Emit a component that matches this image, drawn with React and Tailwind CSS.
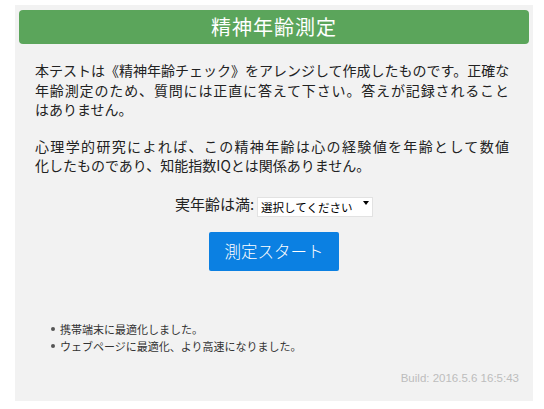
import React, { useState } from "react";

const notes = ["携帯端末に最適化しました。", "ウェブページに最適化、より高速になりました。"];

// full lines are spread to the column width, last lines stay left
const Line = ({ children, last }) => (
  <span className={last ? "block" : "block text-justify [text-align-last:justify]"}>{children}</span>
);

export default function App() {
  const [age, setAge] = useState("");

  return (
    <div className="min-h-[409px] bg-white pt-[5px] pl-[15px] pr-[11px] font-['Noto_Sans_CJK_JP',sans-serif]">
      <div className="bg-[#f2f2f2] h-[396px] flex flex-col pt-[5px] px-[4px]">
        {/* Header */}
        <div className="h-[34px] bg-[#5ba55b] rounded-[4px] flex items-center justify-center">
          <h1 className="text-white text-[20px] leading-none tracking-[1px]">精神年齢測定</h1>
        </div>

        <div className="w-[506px] px-[16px] pt-[17px] text-[14px] leading-[19.5px] text-[#222] whitespace-nowrap">
          <p>
            <Line>本テストは《精神年齢チェック》をアレンジして作成したものです。正確な</Line>
            <Line>年齢測定のため、質問には正直に答えて下さい。答えが記録されること</Line>
            <Line last>はありません。</Line>
          </p>
          <p className="mt-[17px]">
            <Line>心理学的研究によれば、この精神年齢は心の経験値を年齢として数値</Line>
            <Line last>化したものであり、知能指数IQとは関係ありません。</Line>
          </p>
        </div>

        {/* Age select */}
        <div className="flex items-center justify-center gap-[3px] mt-[17px]">
          <span className="text-[15px] text-[#222]">実年齢は満:</span>
          <div className="relative">
            <select
              value={age}
              onChange={(e) => setAge(e.target.value)}
              className="appearance-none h-[20px] w-[116px] bg-white border border-[#e2e2e2] text-[11.5px] leading-[18px] text-black pl-[3px] font-['Noto_Sans_CJK_JP',sans-serif] outline-none"
            >
              <option value="">選択してください</option>
              {Array.from({ length: 80 }, (_, i) => (
                <option key={i} value={i + 10}>
                  {i + 10}歳
                </option>
              ))}
            </select>
            <span className="pointer-events-none absolute right-[4px] top-[8px] w-0 h-0 border-l-[3.5px] border-r-[3.5px] border-t-[4px] border-l-transparent border-r-transparent border-t-black" />
          </div>
        </div>

        <div className="flex justify-center mt-[15px]">
          <button className="w-[130px] h-[39px] bg-[#0b80e2] rounded-[2px] text-white text-[16.5px] font-light">
            測定スタート
          </button>
        </div>

        {/* Notes */}
        <ul className="mt-[50px] pl-[32px] text-[11px] leading-[17px] text-[#333]">
          {notes.map((n) => (
            <li key={n} className="flex items-center gap-[5px]">
              <span className="w-[4px] h-[4px] rounded-full bg-[#555]" />
              {n}
            </li>
          ))}
        </ul>

        <div className="mt-auto pb-[14px] pr-[10px] text-right text-[11.5px] text-[#bdbdbd] font-['Liberation_Sans',sans-serif]">
          Build: 2016.5.6 16:5:43
        </div>
      </div>
    </div>
  );
}
